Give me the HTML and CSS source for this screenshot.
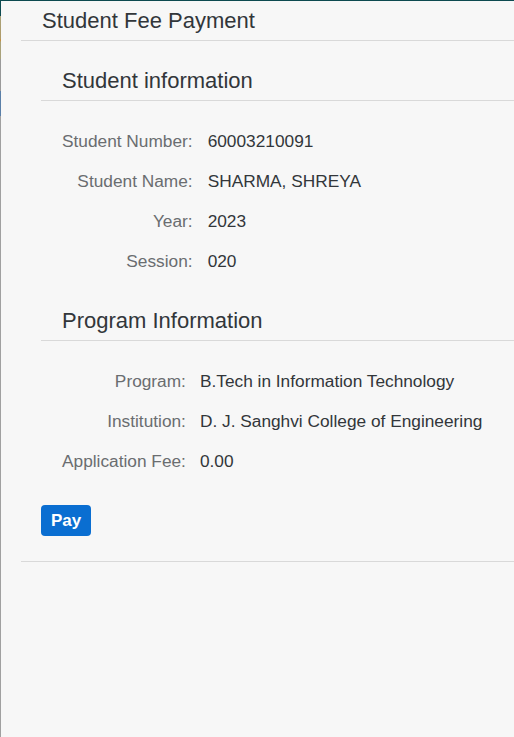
FILE: index.html
```html
<!DOCTYPE html>
<html lang="en">
<head>
<meta charset="utf-8">
<title>Student Fee Payment</title>
<link rel="stylesheet" href="styles.css">
</head>
<body>
<div class="edge"></div>
<main class="page">
  <header class="page-header">
    <h1 class="page-title">Student Fee Payment</h1>
  </header>
  <div class="content">
    <section class="section">
      <h2 class="section-title">Student information</h2>
      <dl class="form form-student">
        <dt class="label">Student Number:</dt><dd class="value">60003210091</dd>
        <dt class="label">Student Name:</dt><dd class="value">SHARMA, SHREYA</dd>
        <dt class="label">Year:</dt><dd class="value">2023</dd>
        <dt class="label">Session:</dt><dd class="value">020</dd>
      </dl>
    </section>
    <section class="section">
      <h2 class="section-title">Program Information</h2>
      <dl class="form form-program">
        <dt class="label">Program:</dt><dd class="value">B.Tech in Information Technology</dd>
        <dt class="label">Institution:</dt><dd class="value">D. J. Sanghvi College of Engineering</dd>
        <dt class="label">Application Fee:</dt><dd class="value">0.00</dd>
      </dl>
    </section>
    <div class="actions">
      <button class="btn-pay" type="button">Pay</button>
    </div>
  </div>
</main>
</body>
</html>
```
FILE: styles.css
```css
html, body {
  margin: 0;
  padding: 0;
}
body {
  background: #f7f7f7;
  font-family: "Liberation Sans", Arial, sans-serif;
  color: #32363a;
  border-top: 1px solid #0d4a50;
  min-height: 736px;
  display: flex;
}
.edge {
  width: 1px;
  flex: none;
  background: linear-gradient(to bottom,
    #0d4a50 0px, #0d4a50 15px,
    #a9a27a 15px, #b09a66 38px, #d08a30 39px, #a9a27a 41px, #a9a27a 58px,
    #9a9a9a 58px, #9a9a9a 90px,
    #5a7fa8 90px, #5a7fa8 115px,
    #a0a0a0 115px, #a0a0a0 100%);
}
.page {
  flex: 1;
  padding-left: 20px;
}
.page-header {
  height: 39px;
  border-bottom: 1px solid #d9d9d9;
  display: flex;
  align-items: center;
  padding-left: 21px;
}
.page-title {
  margin: 0;
  font-size: 22px;
  font-weight: normal;
  color: #32363a;
}
.content {
  padding-left: 20px;
  border-bottom: 1px solid #d9d9d9;
  padding-bottom: 25px;
}
.section {
  margin-top: 20px;
}
.section-title {
  margin: 0;
  height: 40px;
  box-sizing: border-box;
  border-bottom: 1px solid #d9d9d9;
  padding-left: 21px;
  font-size: 22px;
  font-weight: normal;
  line-height: 39px;
  color: #32363a;
}
.form {
  display: grid;
  grid-template-columns: max-content 1fr;
  column-gap: 15px;
  margin: 20px 0 0;
  padding-left: 21px;
  font-size: 17.3px;
}
.form-program {
  column-gap: 14px;
}
.label, .value {
  margin: 0;
  height: 40px;
  box-sizing: border-box;
  padding-top: 1px;
  line-height: 39px;
  white-space: nowrap;
}
.label {
  text-align: right;
  color: #6a6d70;
}
.value {
  color: #32363a;
}
.actions {
  margin-top: 24px;
}
.btn-pay {
  width: 50px;
  height: 31px;
  border: none;
  border-radius: 4px;
  background: #0a6ed1;
  color: #fff;
  font-family: "Liberation Sans", Arial, sans-serif;
  font-size: 17px;
  font-weight: bold;
  padding: 0;
}
```
